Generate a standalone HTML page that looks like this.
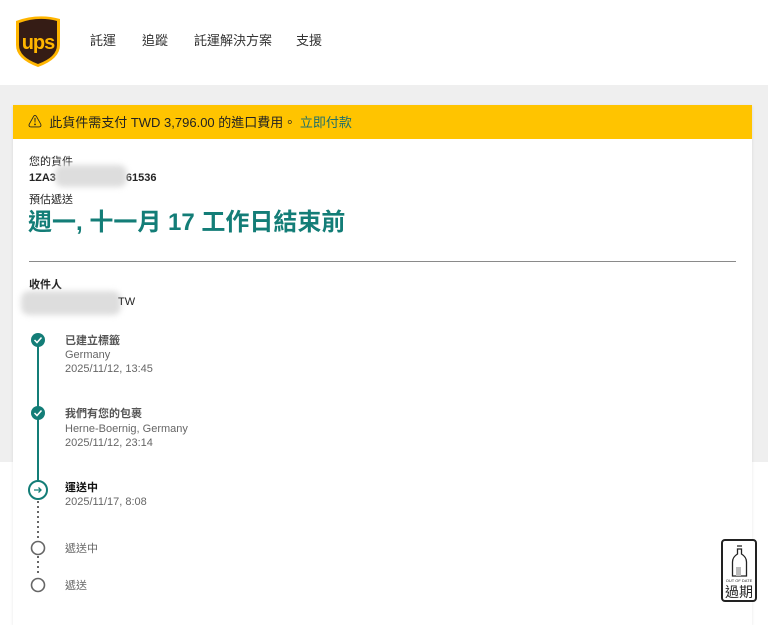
<!DOCTYPE html>
<html><head><meta charset="utf-8"><style>
*{margin:0;padding:0;box-sizing:border-box}
body{width:768px;height:613px;overflow:hidden;background:#fff;font-family:"Liberation Sans","Noto Sans CJK TC",sans-serif;color:#242424;position:relative}
.hdr{position:absolute;left:0;top:0;width:768px;height:85px;background:#fff;box-shadow:0 1px 3px rgba(0,0,0,.08)}
.nav{position:absolute;top:33px;font-size:13px;color:#333;line-height:16px}
.grey{position:absolute;left:0;top:85px;width:768px;height:377px;background:#efefef}
.card{position:absolute;left:13px;top:105px;width:739px;height:520px;background:#fff;box-shadow:0 1px 3px rgba(0,0,0,.1)}
.ban{position:absolute;left:0;top:0;width:739px;height:34px;background:#ffc400;font-size:13px;line-height:34px;padding-left:15px;color:#222}
.t{position:absolute;white-space:nowrap;line-height:14px}
.blur{position:absolute;background:#ddd;filter:blur(3px);border-radius:8px}
.g{color:#666;font-size:11px}
</style></head><body>
<div class="hdr">
<svg style="position:absolute;left:15px;top:15px" width="46" height="53" viewBox="0 0 46 53">
<path d="M1 6 Q23 -2 45 4 L45 30 Q45 44 23 52 Q1 44 1 30 Z" fill="#ffb500"/>
<path d="M4 8 Q23 1 42 6 L42 30 Q42 42 23 49 Q4 42 4 30 Z" fill="#351c15"/>
<text x="23" y="34" font-family="Liberation Sans" font-weight="bold" font-size="20" fill="#ffb500" text-anchor="middle" letter-spacing="-1">ups</text>
</svg>
<div class="nav" style="left:90px">託運</div>
<div class="nav" style="left:142px">追蹤</div>
<div class="nav" style="left:194px">託運解決方案</div>
<div class="nav" style="left:296px">支援</div>
</div>
<div class="grey"></div>
<div class="card">
<div class="ban"><span style="font-size:14px">⚠</span>&nbsp; 此貨件需支付 TWD 3,796.00 的進口費用。 <span style="color:#1f6f6a">立即付款</span></div>
<div class="t" style="left:16px;top:50px;font-size:11px">您的貨件</div>
<div class="t" style="left:16px;top:66px;font-size:11px;font-weight:bold">1ZA3<span style="display:inline-block;width:70px"></span>61536</div>
<div class="blur" style="left:42px;top:60px;width:72px;height:22px"></div>
<div class="t" style="left:16px;top:88px;font-size:11px">預估遞送</div>
<div class="t" style="left:15px;top:104px;font-size:24px;line-height:28px;font-weight:bold;color:#137d77">週一, 十一月 17 工作日結束前</div>
<div style="position:absolute;left:16px;top:156px;width:707px;height:1px;background:#8a8a8a"></div>
<div class="t" style="left:16px;top:173px;font-size:11px;font-weight:bold">收件人</div>
<div class="blur" style="left:8px;top:186px;width:100px;height:24px"></div>
<div class="t" style="left:105px;top:190px;font-size:11px">TW</div>
</div>
<svg style="position:absolute;left:0;top:320px" width="80" height="293">
<line x1="38" y1="20" x2="38" y2="163" stroke="#137d77" stroke-width="2"/>
<line x1="38" y1="181" x2="38" y2="256" stroke="#666" stroke-width="2" stroke-dasharray="2 3"/>
<circle cx="38" cy="20" r="7" fill="#137d77"/><path d="M34.5 20 l2.5 2.5 l4.5-5" stroke="#fff" stroke-width="1.5" fill="none"/>
<circle cx="38" cy="93" r="7" fill="#137d77"/><path d="M34.5 93 l2.5 2.5 l4.5-5" stroke="#fff" stroke-width="1.5" fill="none"/>
<circle cx="38" cy="170" r="9" fill="#fff" stroke="#137d77" stroke-width="2"/><path d="M34 170 h7 m-2.5-2.5 l2.5 2.5 l-2.5 2.5" stroke="#137d77" stroke-width="1.3" fill="none"/>
<circle cx="38" cy="228" r="6.5" fill="#fff" stroke="#666" stroke-width="1.6"/>
<circle cx="38" cy="265" r="6.5" fill="#fff" stroke="#666" stroke-width="1.6"/>
</svg>
<div class="t" style="left:65px;top:334px;font-size:11px;font-weight:bold;color:#555">已建立標籤</div>
<div class="t g" style="left:65px;top:348px">Germany</div>
<div class="t g" style="left:65px;top:362px">2025/11/12, 13:45</div>
<div class="t" style="left:65px;top:407px;font-size:11px;font-weight:bold;color:#555">我們有您的包裹</div>
<div class="t g" style="left:65px;top:422px">Herne-Boernig, Germany</div>
<div class="t g" style="left:65px;top:436px">2025/11/12, 23:14</div>
<div class="t" style="left:65px;top:481px;font-size:11px;font-weight:bold;color:#111">運送中</div>
<div class="t g" style="left:65px;top:495px">2025/11/17, 8:08</div>
<div class="t g" style="left:65px;top:542px">遞送中</div>
<div class="t g" style="left:65px;top:579px">遞送</div>
<div style="position:absolute;left:721px;top:539px;width:36px;height:63px;border:2px solid #222;border-radius:4px;background:#fff">
<svg width="32" height="38" style="position:absolute;left:0;top:2px"><path d="M14 3h5 M14.5 6h4 v5 q5 3 5 8 v14 h-14 v-14 q0 -5 5 -8 z" stroke="#222" stroke-width="1.3" fill="none"/><rect x="13" y="24" width="5" height="9" fill="#bbb"/></svg>
<div style="position:absolute;left:0;top:37px;width:32px;text-align:center;font-size:4px">OUT OF DATE</div>
<div style="position:absolute;left:0;top:43px;width:32px;text-align:center;font-size:14px;line-height:16px">過期</div>
</div>
</body></html>
